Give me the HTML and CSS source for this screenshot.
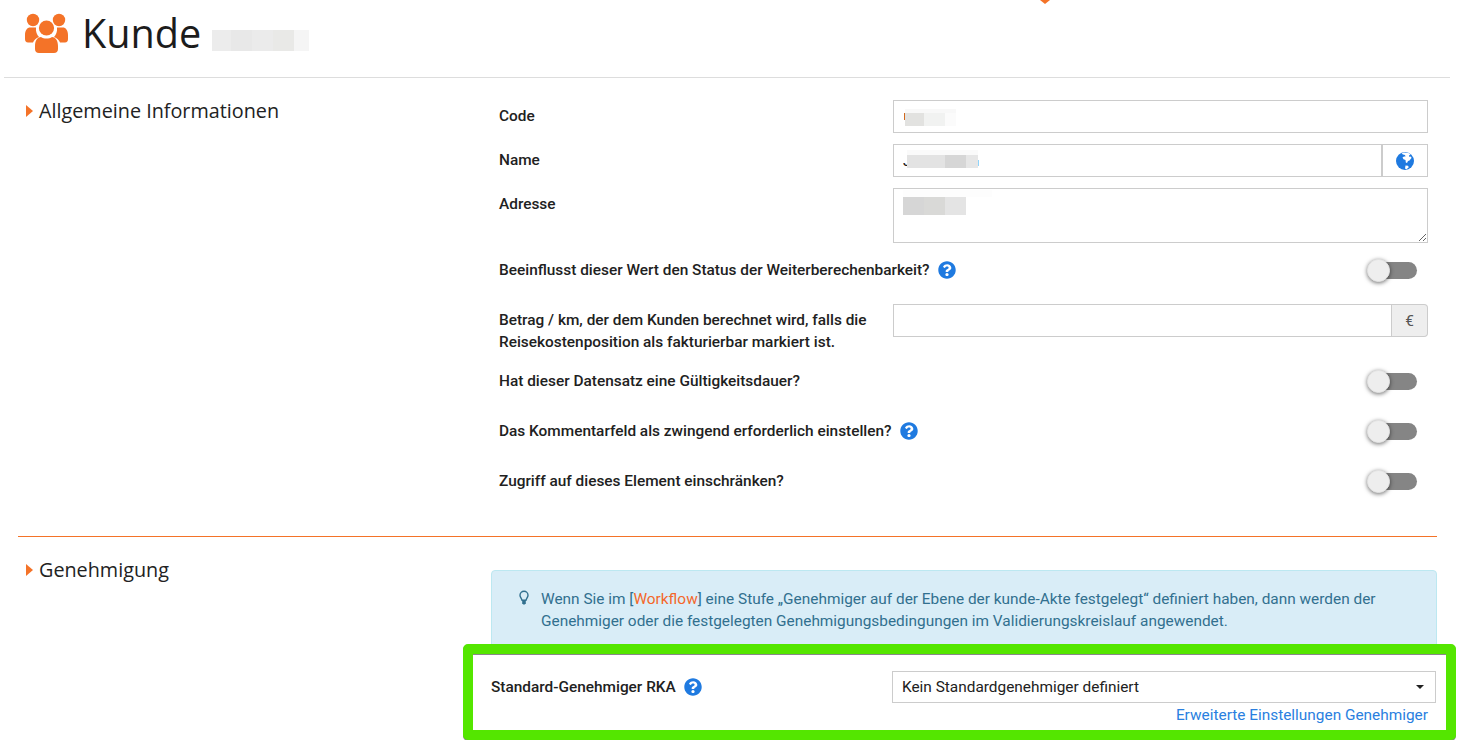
FILE: index.html
```html
<!DOCTYPE html>
<html lang="de">
<head>
    <meta charset="UTF-8">
    <title>Kunde</title>
    <link rel="stylesheet" href="styles.css">
</head>
<body>
<svg class="defs" width="0" height="0">
    <symbol id="icon-help" viewBox="0 0 512 512">
        <path d="M504 256c0 136.997-111.043 248-248 248S8 392.997 8 256C8 119.083 119.043 8 256 8s248 111.083 248 248zM262.655 90c-54.497 0-89.255 22.957-116.549 63.758-3.536 5.286-2.353 12.415 2.715 16.258l34.699 26.31c5.205 3.947 12.621 3.008 16.665-2.122 17.864-22.658 30.113-35.797 57.303-35.797 20.429 0 45.698 13.148 45.698 32.958 0 14.976-12.363 22.667-32.534 33.976C247.128 238.528 216 254.941 216 296v4c0 6.627 5.373 12 12 12h56c6.627 0 12-5.373 12-12v-1.333c0-28.462 83.186-29.647 83.186-106.667 0-58.002-60.165-102-116.531-102zM256 338c-25.365 0-46 20.635-46 46 0 25.364 20.635 46 46 46s46-20.636 46-46c0-25.365-20.635-46-46-46z"/>
    </symbol>
</svg>

<div class="top-caret"></div>

<header class="page-header">
    <svg class="users-icon" viewBox="0 0 43 40">
        <circle cx="8" cy="7" r="6.2"/>
        <circle cx="34" cy="7" r="6.2"/>
        <circle cx="21.5" cy="15" r="7.6"/>
        <path d="M0 22c0-5 2.500-7.500 5-7.500h6c-.5 4 1 7.500 3 9.500-3 1-5 3-6 5.500H3c-2 0-3-1.500-3-3.500z"/>
        <path d="M43 22c0-5-2.500-7.500-5-7.500h-6c.5 4-1 7.500-3 9.500 3 1 5 3 6 5.500h5c2 0 3-1.500 3-3.500z"/>
        <path d="M10 33c0-6 3-9 6-9 1.500 1 3.500 1.500 5.500 1.500s4-.5 5.500-1.500c3 0 6 3 6 9v3c0 2.500-1.500 4-4 4H14c-2.500 0-4-1.500-4-4z"/>
    </svg>
    <h1>Kunde</h1>
    <div class="blur-row blur-title">
        <span class="b19 c-ec"></span><span class="b21 c-e8"></span><span class="b21 c-eb"></span><span class="b21 c-e9"></span><span class="b15 c-f5"></span>
    </div>
</header>

<section class="section section-first">
    <h2 class="section-title">Allgemeine Informationen</h2>
    <div class="form">
        <div class="row">
            <label class="row-label">Code</label>
            <div class="field">
                <input class="text-input" type="text">
                <div class="blur-row blur-code">
                    <span class="sliver-orange"></span><span class="b19 c-e2"></span><span class="b21 c-f1"></span><span class="b11 c-fb"></span>
                </div>
                <div class="blur-strip strip-code"></div>
            </div>
        </div>
        <div class="row">
            <label class="row-label">Name</label>
            <div class="field input-group">
                <input class="text-input" type="text" value="J">
                <span class="addon addon-white">
                    <svg class="globe-icon" viewBox="0 0 18 18">
                        <circle cx="9" cy="9" r="9" fill="#1f7ae0"/>
                        <path fill="#fff" d="M5.500 1.500 8 .6l4.500.4 2 1.500-1.500 1 .5 1.500 1.500-.5.500 1.500-2 2.500-1.500.5-1 2-1.200-.5-.3-2.500-2-.8-1-1.700 1.500-1 1.500 0-.5-1.500-2-.5zM9.500 13.500l2.500.3.800 1.500-2.300 2-1.500-.8z"/>
                    </svg>
                </span>
                <div class="blur-row blur-name">
                    <span class="b16 c-e3"></span><span class="b22 c-e3"></span><span class="b21 c-d6"></span><span class="b12 c-e6"></span><span class="sliver-blue"></span>
                </div>
                <div class="blur-strip strip-name"></div>
            </div>
        </div>
        <div class="row">
            <label class="row-label">Adresse</label>
            <div class="field">
                <textarea class="text-area"></textarea>
                <div class="blur-row blur-address">
                    <span class="b21 c-d6"></span><span class="b21 c-d9"></span><span class="b21 c-e4"></span>
                </div>
                <div class="blur-strip strip-address"></div>
            </div>
        </div>
        <div class="row-toggle">
            <span class="toggle-label">Beeinflusst dieser Wert den Status der Weiterberechenbarkeit?
                <svg class="help-icon"><use href="#icon-help"/></svg>
            </span>
            <span class="toggle"><span class="knob"></span></span>
        </div>
        <div class="row row-amount">
            <label class="row-label">Betrag / km, der dem Kunden berechnet wird, falls die Reisekostenposition als fakturierbar markiert ist.</label>
            <div class="field input-group">
                <input class="text-input" type="text">
                <span class="addon addon-grey">€</span>
            </div>
        </div>
        <div class="row-toggle">
            <span class="toggle-label">Hat dieser Datensatz eine Gültigkeitsdauer?</span>
            <span class="toggle"><span class="knob"></span></span>
        </div>
        <div class="row-toggle">
            <span class="toggle-label">Das Kommentarfeld als zwingend erforderlich einstellen?
                <svg class="help-icon"><use href="#icon-help"/></svg>
            </span>
            <span class="toggle"><span class="knob"></span></span>
        </div>
        <div class="row-toggle">
            <span class="toggle-label">Zugriff auf dieses Element einschränken?</span>
            <span class="toggle"><span class="knob"></span></span>
        </div>
    </div>
</section>

<section class="section">
    <h2 class="section-title">Genehmigung</h2>
    <div class="approval">
        <div class="alert">
            <svg class="bulb-icon" viewBox="0 0 12 16">
                <path fill="none" stroke="#31708f" stroke-width="1.400" d="M6 1.200a4 4 0 0 0-4 4c0 2 1.500 2.800 2 5h4c.5-2.200 2-3 2-5a4 4 0 0 0-4-4z"/>
                <path fill="#31708f" d="M4.200 11h3.600v2.200l-1 1.300H5.200l-1-1.300z"/>
            </svg>
            <p class="alert-text">Wenn Sie im [<a class="alert-link" href="#">Workflow</a>] eine Stufe „Genehmiger auf der Ebene der kunde-Akte festgelegt“ definiert haben, dann werden der Genehmiger oder die festgelegten Genehmigungsbedingungen im Validierungskreislauf angewendet.</p>
        </div>
        <div class="highlight">
            <div class="approver-row">
                <span class="approver-label">Standard-Genehmiger RKA
                    <svg class="help-icon"><use href="#icon-help"/></svg>
                </span>
                <div class="select-wrap">
                    <select class="select">
                        <option>Kein Standardgenehmiger definiert</option>
                    </select>
                </div>
            </div>
            <div class="link-row"><a href="#">Erweiterte Einstellungen Genehmiger</a></div>
        </div>
    </div>
</section>
</body>
</html>
```

FILE: styles.css
```css
html, body {
    margin: 0;
    padding: 0;
    background: #fff;
    overflow: hidden;
}

body {
    font-family: Roboto, "Liberation Sans", sans-serif;
    font-size: 15.4px;
    line-height: 22px;
    color: #212121;
    position: relative;
}

.defs {
    position: absolute;
}

.top-caret {
    position: absolute;
    left: 1040px;
    top: 0;
    border-left: 5px solid transparent;
    border-right: 5px solid transparent;
    border-top: 4px solid #f47328;
}

.page-header {
    display: flex;
    align-items: center;
    height: 77px;
    margin: 0 18px 0 4px;
    padding-left: 21px;
    border-bottom: 1px solid #ddd;
    box-sizing: content-box;
}

.users-icon {
    width: 43px;
    height: 40px;
    fill: #f47328;
    margin-top: -11px;
}

h1 {
    font-family: "Open Sans", sans-serif;
    font-weight: 400;
    font-size: 39.6px;
    line-height: 54px;
    margin: -12px 0 0 14px;
    color: #1c1c1c;
}

.blur-row {
    display: flex;
}

.blur-row span {
    display: block;
    height: 100%;
}

.blur-title {
    height: 21px;
    margin: 3px 0 0 11px;
}

.b11 { width: 11px; }
.b12 { width: 12px; }
.b15 { width: 15px; }
.b16 { width: 16px; }
.b19 { width: 19px; }
.b21 { width: 21px; }
.b22 { width: 22px; }

.c-d6 { background: #d6d6d6; }
.c-d9 { background: #d9d9d7; }
.c-e2 { background: #e2e2e0; }
.c-e3 { background: #e3e3e3; }
.c-e4 { background: #e4e4e4; }
.c-e6 { background: #e6e6e6; }
.c-e8 { background: #e8e8e8; }
.c-e9 { background: #e9e9e7; }
.c-eb { background: #ebebeb; }
.c-ec { background: #ececec; }
.c-f1 { background: #f1f2f1; }
.c-f5 { background: #f5f5f5; }
.c-fb { background: #fbfbfb; }

.blur-row .sliver-orange {
    width: 1px;
    height: 7px;
    background: #d2691e;
}

.blur-row .sliver-blue {
    width: 1px;
    height: 6px;
    margin-top: 5px;
    background: #8fd4fb;
}

.section {
    display: grid;
    grid-template-columns: 473px 1fr;
    margin: 0 31px 0 18px;
}

.section-first {
    padding-bottom: 21px;
    border-bottom: 1px solid #f47328;
}

.section-title {
    font-family: "Open Sans", sans-serif;
    font-weight: 400;
    font-size: 19.8px;
    line-height: 22px;
    color: #222;
    margin: 22px 0 0;
    padding-left: 21px;
    position: relative;
}

.section-title::before {
    content: "";
    position: absolute;
    left: 8px;
    top: 5px;
    border-top: 6px solid transparent;
    border-bottom: 6px solid transparent;
    border-left: 7px solid #f47328;
}

.form {
    padding: 22px 9px 0 8px;
}

.row {
    display: grid;
    grid-template-columns: 394px 535px;
    margin-bottom: 11px;
}

.row-label {
    font-weight: 500;
    padding: 5px 20px 0 0;
}

.row-amount {
    margin-bottom: 12px;
}

.field {
    position: relative;
}

.input-group {
    display: flex;
}

.text-input,
.text-area {
    display: block;
    width: 100%;
    box-sizing: border-box;
    border: 1px solid #ccc;
    font-family: inherit;
    font-size: 15.4px;
    color: #212121;
    background: #fff;
    padding: 0 9px;
    margin: 0;
    outline: none;
    border-radius: 0;
}

.text-input {
    height: 33px;
    flex: 1;
}

.text-area {
    height: 55px;
}

.addon {
    display: flex;
    align-items: center;
    justify-content: center;
    width: 36px;
    height: 33px;
    box-sizing: border-box;
    border: 1px solid #ccc;
    border-left: none;
}

.addon-white {
    width: 46px;
    border-left: 1px solid #ccc;
}

.addon-grey {
    background: #eee;
    color: #555;
    border-radius: 0 4px 4px 0;
}

.globe-icon {
    width: 18px;
    height: 18px;
}

.blur-code,
.blur-name,
.blur-address,
.blur-strip {
    position: absolute;
}

.blur-code {
    left: 11px;
    top: 13px;
    height: 13px;
}

.blur-name {
    left: 14px;
    top: 11px;
    height: 13px;
}

.blur-address {
    left: 10px;
    top: 9px;
    height: 18px;
}

.strip-code {
    left: 12px;
    top: 9px;
    width: 51px;
    height: 4px;
    background: #f8f8f8;
}

.strip-name {
    left: 14px;
    top: 6px;
    width: 71px;
    height: 5px;
    background: #fafafa;
}

.strip-address {
    left: 10px;
    top: 2px;
    width: 89px;
    height: 7px;
    background: #fdfdfd;
}

.row-toggle {
    display: flex;
    justify-content: space-between;
    align-items: center;
    height: 39px;
    margin-bottom: 11px;
    padding: 5px 11px 12px 0;
    box-sizing: border-box;
}

.toggle-label,
.approver-label {
    display: flex;
    align-items: center;
    font-weight: 500;
    gap: 8.600px;
}

.help-icon {
    width: 18px;
    height: 18px;
    fill: #1f7ae0;
}

.toggle {
    position: relative;
    display: block;
    width: 47px;
    height: 17px;
    background: #858585;
    border-radius: 9px;
}

.knob {
    position: absolute;
    left: -3px;
    top: -3px;
    width: 23px;
    height: 23px;
    box-sizing: border-box;
    border-radius: 50%;
    background: #eee;
    border: 1px solid #e4e4e4;
    box-shadow: 0 1px 4px rgba(0, 0, 0, 0.55);
}

.approval {
    padding-top: 33px;
}

.alert {
    position: relative;
    box-sizing: border-box;
    height: 90px;
    padding: 17px 30px 0 49px;
    background: #d9edf7;
    border: 1px solid #bce8f1;
    border-radius: 4px;
    color: #31708f;
}

.alert-text {
    margin: 0;
}

.bulb-icon {
    position: absolute;
    left: 26px;
    top: 19px;
    width: 12px;
    height: 16px;
}

.alert-link {
    color: #f4672a;
    text-decoration: none;
}

.highlight {
    position: relative;
    margin: -16px -19px 0 -28px;
    height: 96px;
    box-sizing: border-box;
    padding: 17px 10px 0 18px;
    background: #fff;
    border: 10px solid #54e600;
    border-radius: 5px;
    box-shadow: inset 0 1px 0 #888, 0 1px 0 #888;
}

.approver-row {
    display: flex;
    justify-content: space-between;
    align-items: center;
}

.select-wrap {
    position: relative;
    width: 544px;
}

.select-wrap::after {
    content: "";
    position: absolute;
    right: 12px;
    top: 14px;
    border-left: 4px solid transparent;
    border-right: 4px solid transparent;
    border-top: 4px solid #212121;
}

.select {
    display: block;
    appearance: none;
    width: 100%;
    height: 32px;
    box-sizing: border-box;
    padding: 0 9px;
    border: 1px solid #ccc;
    border-radius: 0;
    background: #fff;
    font-family: inherit;
    font-size: 15.4px;
    color: #212121;
}

.link-row {
    text-align: right;
    padding-right: 8px;
    margin-top: 1px;
}

.link-row a {
    color: #2a7fe0;
    text-decoration: none;
}
```
